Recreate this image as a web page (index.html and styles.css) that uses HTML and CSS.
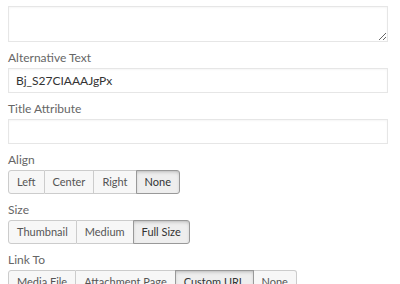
FILE: index.html
```html
<!DOCTYPE html>
<html>
<head>
<meta charset="utf-8">
<link rel="stylesheet" href="styles.css">
</head>
<body>
<div class="panel">
  <div class="field first">
    <textarea class="textarea"></textarea>
  </div>
  <div class="field">
    <label class="label">Alternative Text</label>
    <input class="input" type="text" value="Bj_S27CIAAAJgPx">
  </div>
  <div class="field">
    <label class="label">Title Attribute</label>
    <input class="input" type="text" value="">
  </div>
  <div class="field">
    <label class="label">Align</label>
    <div class="group">
      <span class="btn">Left</span><span class="btn">Center</span><span class="btn">Right</span><span class="btn active">None</span>
    </div>
  </div>
  <div class="field">
    <label class="label">Size</label>
    <div class="group">
      <span class="btn">Thumbnail</span><span class="btn">Medium</span><span class="btn active">Full Size</span>
    </div>
  </div>
  <div class="field">
    <label class="label">Link To</label>
    <div class="group">
      <span class="btn">Media File</span><span class="btn">Attachment Page</span><span class="btn active">Custom URL</span><span class="btn">None</span>
    </div>
  </div>
</div>
</body>
</html>
```
FILE: styles.css
```css
html, body {
  margin: 0;
  padding: 0;
  background: #fff;
  overflow: hidden;
}
body {
  font-family: Lato, "Open Sans", sans-serif;
  font-size: 12px;
  color: #555;
}
.panel {
  padding: 0 12px 0 8px;
  margin-top: -4px;
}
.field {
  display: flex;
  flex-direction: column;
  align-items: flex-start;
  margin-top: 8px;
}
.field.first {
  margin-top: 10px;
}
.label {
  display: block;
  color: #666;
  font-size: 12px;
  line-height: 16px;
  margin-bottom: 2px;
}
.textarea, .input {
  box-sizing: border-box;
  width: 380px;
  border: 1px solid #e6e6e6;
  box-shadow: inset 0 1px 2px rgba(0,0,0,0.04);
  background: #fff;
  font-family: Lato, sans-serif;
  font-size: 12px;
  color: #333;
  outline: none;
  margin: 0;
  border-radius: 0;
}
.textarea {
  height: 36px;
  display: block;
  resize: vertical;
  padding: 4px 8px;
}
.input {
  height: 25px;
  padding: 0 7px;
}
.group {
  display: flex;
}
.btn {
  display: inline-block;
  box-sizing: border-box;
  height: 24px;
  line-height: 22px;
  padding: 0 8px;
  border: 1px solid #ccc;
  border-left-width: 0;
  background: #f7f7f7;
  color: #555;
  font-size: 11px;
}
.btn:first-child {
  border-left-width: 1px;
  border-radius: 3px 0 0 3px;
}
.btn:last-child {
  border-radius: 0 3px 3px 0;
}
.btn.active {
  background: #eee;
  border-color: #999;
  border-left-width: 1px;
  margin-left: -1px;
  box-shadow: inset 0 2px 5px -3px rgba(0,0,0,0.5);
  color: #333;
}
```
